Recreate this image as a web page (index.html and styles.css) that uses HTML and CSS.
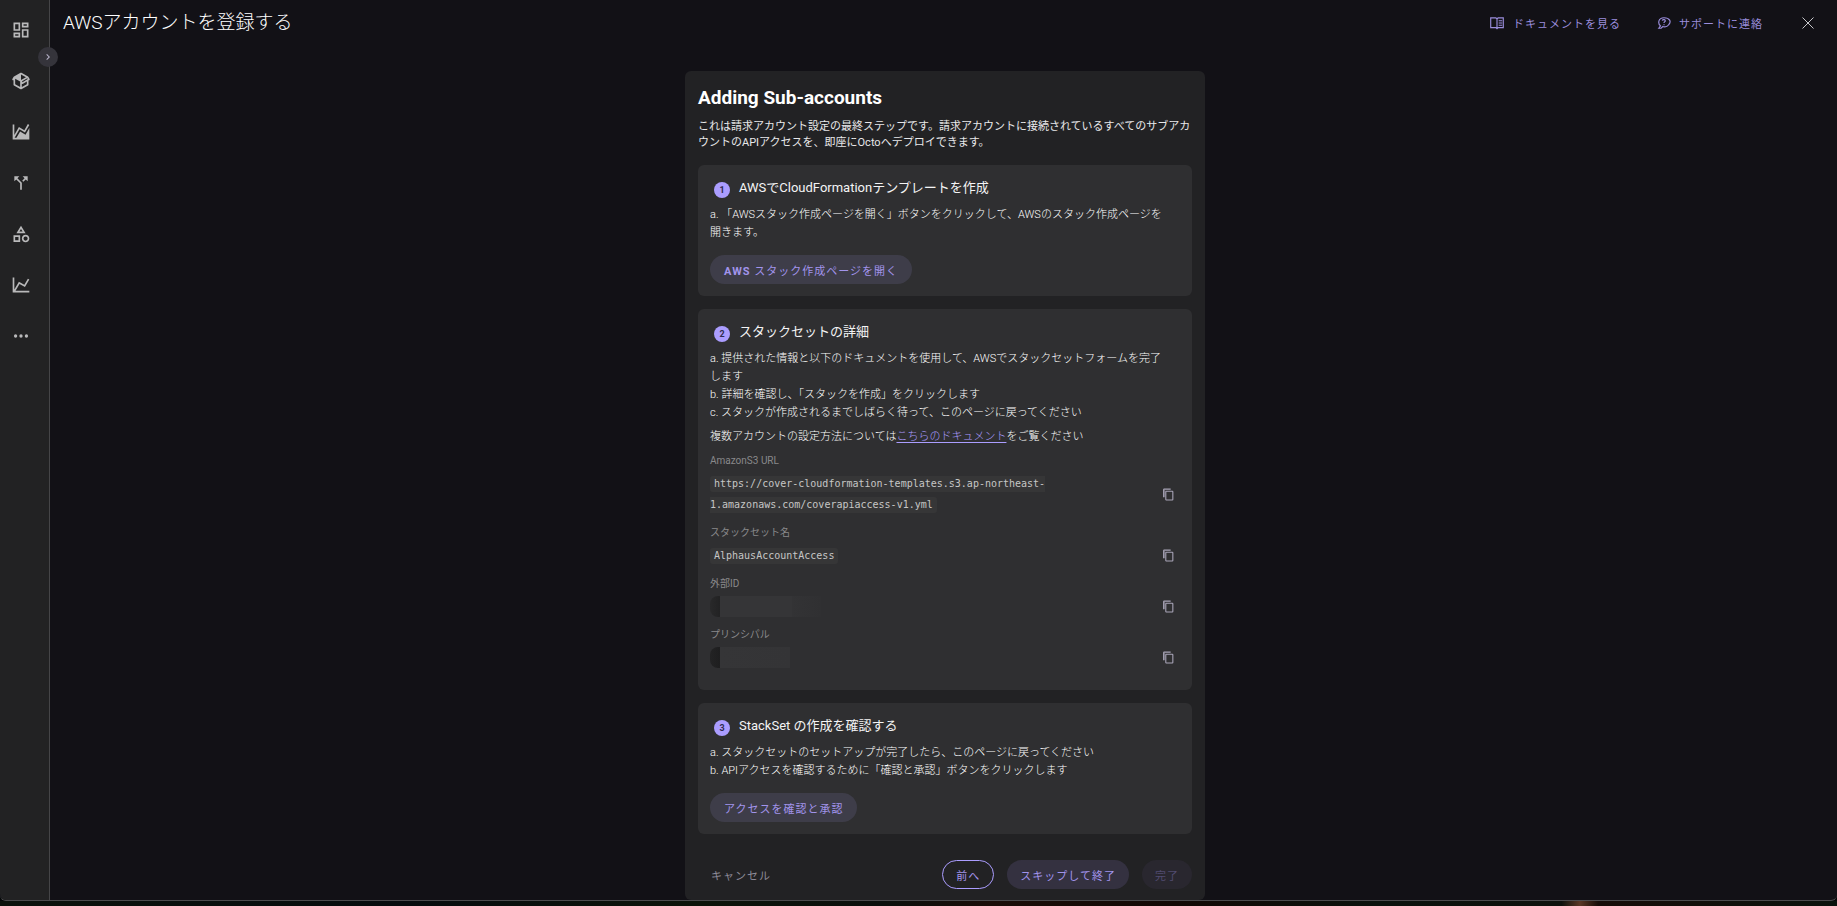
FILE: index.html
```html
<!DOCTYPE html>
<html lang="ja">
<head>
    <meta charset="UTF-8">
    <meta name="viewport" content="width=device-width, initial-scale=1.0">
    <title>AWSアカウントを登録する</title>
    <link rel="stylesheet" href="styles.css">
</head>
<body>
    <!-- Shared icons -->
    <svg class="defs" aria-hidden="true">
        <symbol id="icon-copy" viewBox="0 0 24 24">
            <path d="M19,21H8V7H19M19,5H8A2,2 0 0,0 6,7V21A2,2 0 0,0 8,23H19A2,2 0 0,0 21,21V7A2,2 0 0,0 19,5M16,1H4A2,2 0 0,0 2,3V17H4V3H16V1Z"/>
            <path d="M3 3h3v14H3z" opacity=".5"/>
        </symbol>
    </svg>

    <div class="window">
        <nav class="sidebar">
            <a href="#" aria-label="Dashboard"><svg viewBox="0 0 24 24"><path d="M19 5v2h-4V5h4M9 5v6H5V5h4m10 8v6h-4v-6h4M9 17v2H5v-2h4M21 3h-8v6h8V3zM11 3H3v10h8V3zm10 8h-8v10h8V11zm-10 4H3v6h8v-6z"/></svg></a>
            <a href="#" aria-label="Inventory"><svg viewBox="0 0 24 24"><path d="M2,10.96C1.5,10.68 1.35,10.07 1.63,9.59L3.13,7C3.24,6.8 3.41,6.66 3.6,6.58L11.43,2.18C11.59,2.06 11.79,2 12,2C12.21,2 12.41,2.06 12.57,2.18L20.47,6.62C20.66,6.72 20.82,6.88 20.91,7.08L22.36,9.6C22.64,10.08 22.47,10.69 22,10.96L21,11.54V16.5C21,16.88 20.79,17.21 20.47,17.38L12.57,21.82C12.41,21.94 12.21,22 12,22C11.79,22 11.59,21.94 11.43,21.82L3.53,17.38C3.21,17.21 3,16.88 3,16.5V10.96C2.7,11.13 2.32,11.14 2,10.96M12,4.15V4.15L12,10.85V10.85L17.96,7.5L12,4.15M5,15.91L11,19.29V12.58L5,9.21V15.91M19,15.91V12.69L14,15.59C13.67,15.77 13.3,15.76 13,15.6V19.29L19,15.91M13.85,13.36L20.13,9.73L19.55,8.72L13.27,12.35L13.85,13.36Z"/></svg></a>
            <a href="#" aria-label="Usage"><svg viewBox="0 0 24 24"><path d="M17.45,15.18L22,7.31V19L22,21H2V3H4V15.54L9.5,6L16,9.78L20.24,2.45L21.97,3.45L16.74,12.5L10.23,8.75L4.31,19H6.57L10.96,11.44L17.45,15.18Z"/></svg></a>
            <a href="#" aria-label="Allocation"><svg viewBox="0 0 24 24"><path d="M14,4L16.29,6.29L13.41,9.17L14.83,10.59L17.71,7.71L20,10V4M10,4H4V10L6.29,7.71L11,12.41V20H13V11.59L7.71,6.29"/></svg></a>
            <a href="#" aria-label="Categories"><svg viewBox="0 0 24 24"><path d="M11,13.5V21.5H3V13.5H11M9,15.5H5V19.5H9V15.5M12,2L17.5,11H6.5L12,2M12,5.86L10.08,9H13.92L12,5.86M17.5,13C20,13 22,15 22,17.5C22,20 20,22 17.5,22C15,22 13,20 13,17.5C13,15 15,13 17.5,13M17.5,15A2.5,2.5 0 0,0 15,17.5A2.5,2.5 0 0,0 17.5,20A2.5,2.5 0 0,0 20,17.5A2.5,2.5 0 0,0 17.5,15Z"/></svg></a>
            <a href="#" aria-label="Forecast"><svg viewBox="0 0 24 24"><path d="M16,11.78L20.24,4.45L21.97,5.45L16.74,14.5L10.23,10.75L5.46,19H22V21H2V3H4V17.54L9.5,8L16,11.78Z"/></svg></a>
            <a href="#" aria-label="More"><svg viewBox="0 0 24 24"><circle cx="5.5" cy="12" r="2"/><circle cx="12" cy="12" r="2"/><circle cx="18.5" cy="12" r="2"/></svg></a>
            <button class="sidebar-toggle" aria-label="Expand"><svg viewBox="0 0 24 24"><path d="M8.59,16.58L13.17,12L8.59,7.41L10,6L16,12L10,18L8.59,16.58Z"/></svg></button>
        </nav>

        <div class="page">
            <header class="topbar">
                <h1>AWSアカウントを登録する</h1>
                <div class="topbar-actions">
                    <a href="#" class="top-link">
                        <svg class="line book" viewBox="0 0 28 24"><path d="M3 3h9l2 2 2-2h9v17h-9l-2 2-2-2H3zM14 5v16M17 8h6M17 12h6M17 16h6"/></svg>
                        <span>ドキュメントを見る</span>
                    </a>
                    <a href="#" class="top-link support">
                        <svg class="line chat" viewBox="0 0 24 24"><path d="M3 21l3-4C1 13 2 3 12 3s13 7 8 12c-3 4-8 4-10 3l-3 3zM9 8c1-3 6-2 5 1-1 1-2 1-2 3M12 14v2"/></svg>
                        <span>サポートに連絡</span>
                    </a>
                    <button class="close" aria-label="閉じる"><svg class="line" viewBox="0 0 28 28"><path d="M3 3l22 22M25 3L3 25"/></svg></button>
                </div>
            </header>

            <main class="content">
                <div class="card">
                    <h2>Adding Sub-accounts</h2>
                    <p class="intro">これは請求アカウント設定の最終ステップです。請求アカウントに接続されているすべてのサブアカウントのAPIアクセスを、即座にOctoへデプロイできます。</p>

                    <section class="step">
                        <h3><span class="num">1</span>AWSでCloudFormationテンプレートを作成</h3>
                        <p>a. 「AWSスタック作成ページを開く」ボタンをクリックして、AWSのスタック作成ページを<br>開きます。</p>
                        <button class="btn tonal"><b>AWS</b> スタック作成ページを開く</button>
                    </section>

                    <section class="step">
                        <h3><span class="num">2</span>スタックセットの詳細</h3>
                        <p>a. 提供された情報と以下のドキュメントを使用して、AWSでスタックセットフォームを完了<br>します</p>
                        <p>b. 詳細を確認し、「スタックを作成」をクリックします</p>
                        <p>c. スタックが作成されるまでしばらく待って、このページに戻ってください</p>
                        <p class="note">複数アカウントの設定方法については<a href="#">こちらのドキュメント</a>をご覧ください</p>

                        <dl class="fields">
                            <dt>AmazonS3 URL</dt>
                            <dd>
                                <div class="value"><code>https://cover-cloudformation-templates.s3.ap-northeast-1.amazonaws.com/coverapiaccess-v1.yml</code></div>
                                <button class="copy" aria-label="コピー"><svg><use href="#icon-copy"/></svg></button>
                            </dd>
                            <dt>スタックセット名</dt>
                            <dd>
                                <div class="value"><code>AlphausAccountAccess</code></div>
                                <button class="copy" aria-label="コピー"><svg><use href="#icon-copy"/></svg></button>
                            </dd>
                            <dt>外部ID</dt>
                            <dd>
                                <div class="value"><span class="masked wide"></span></div>
                                <button class="copy" aria-label="コピー"><svg><use href="#icon-copy"/></svg></button>
                            </dd>
                            <dt>プリンシパル</dt>
                            <dd>
                                <div class="value"><span class="masked"></span></div>
                                <button class="copy" aria-label="コピー"><svg><use href="#icon-copy"/></svg></button>
                            </dd>
                        </dl>
                    </section>

                    <section class="step">
                        <h3><span class="num">3</span>StackSet の作成を確認する</h3>
                        <p>a. スタックセットのセットアップが完了したら、このページに戻ってください</p>
                        <p>b. APIアクセスを確認するために「確認と承認」ボタンをクリックします</p>
                        <button class="btn tonal">アクセスを確認と承認</button>
                    </section>

                    <footer class="actions">
                        <button class="btn text">キャンセル</button>
                        <button class="btn outlined">前へ</button>
                        <button class="btn skip">スキップして終了</button>
                        <button class="btn" disabled>完了</button>
                    </footer>
                </div>
            </main>
        </div>
    </div>
    <div class="desktop"></div>
</body>
</html>
```
FILE: styles.css
```css
* {
    box-sizing: border-box;
}
body {
    margin: 0;
    min-height: 100vh;
    display: flex;
    flex-direction: column;
    background-color: #050808;
    color: #e8e8ea;
    font-family: Roboto, "Noto Sans CJK JP", sans-serif;
    font-size: 11px;
}
h1, h2, h3, p, dl, dd {
    margin: 0;
}
button {
    font-family: inherit;
    border: none;
    padding: 0;
    background: none;
    cursor: pointer;
}
svg {
    display: block;
    fill: currentColor;
}
svg.line {
    fill: none;
    stroke: currentColor;
    stroke-width: 2;
}
.defs {
    display: none;
}
.window {
    flex: 1;
    display: flex;
    background-color: #121116;
    border-bottom: 1px solid #4c4c4e;
    border-radius: 0 0 6px 6px;
}
.desktop {
    height: 5px;
    background: linear-gradient(90deg, #0b120c, #060c0e 22%, #0c140a 38%, #0a0f0c 48%, #1a0d08 54%, #120905 64%, #0a120d 75%, #0d110c 85%, #5a3826 86%, #160c08 87%, #0a130d);
}

/* Sidebar */
.sidebar {
    position: relative;
    flex: none;
    width: 50px;
    padding: 4px 8px 0 0;
    background-color: #222223;
    border-right: 1px solid #454547;
    border-bottom-left-radius: 6px;
}
.sidebar a {
    display: flex;
    align-items: center;
    justify-content: center;
    height: 51px;
    color: #b9b9ba;
}
.sidebar a svg {
    width: 20px;
    height: 20px;
}
.sidebar-toggle {
    position: absolute;
    top: 47px;
    right: -9px;
    width: 20px;
    height: 20px;
    border-radius: 50%;
    background-color: #35343b;
    color: #b9b5cc;
}
.sidebar-toggle svg {
    width: 12px;
    height: 12px;
    margin: 0 auto;
}

/* Header */
.page {
    flex: 1;
    display: flex;
    flex-direction: column;
}
.topbar {
    display: flex;
    justify-content: space-between;
    height: 71px;
    padding: 9px 22px 0 13px;
}
.topbar h1 {
    font-size: 19px;
    line-height: 28px;
    font-weight: 300;
    color: #fff;
}
.topbar-actions {
    display: flex;
    height: 28px;
    align-items: center;
}
.top-link {
    display: flex;
    align-items: center;
    gap: 8px;
    margin-right: 36px;
    color: #9a8ddc;
    letter-spacing: 1px;
    text-decoration: none;
}
.top-link.support {
    margin-right: 38px;
}
.book {
    width: 16px;
    height: 14px;
}
.chat {
    width: 14px;
    height: 14px;
}
.close {
    width: 14px;
    height: 14px;
    color: #c6c6ca;
}

/* Card */
.content {
    flex: 1;
    display: flex;
    justify-content: center;
    padding-left: 3px;
}
.card {
    width: 520px;
    padding: 14px 13px 11px;
    background-color: #222224;
    border-radius: 6px;
}
.card h2 {
    font-size: 19px;
    line-height: 26px;
    font-weight: 700;
    color: #fff;
}
.intro {
    margin: 8px 0 14px;
    line-height: 16px;
}
.step {
    margin-bottom: 13px;
    padding: 12px;
    background-color: #2f2f31;
    border-radius: 6px;
}
.step h3 {
    display: flex;
    align-items: center;
    gap: 9px;
    margin-bottom: 7px;
    padding-left: 4px;
    font-size: 13px;
    line-height: 22px;
    font-weight: 400;
    color: #f4f4f5;
}
.num {
    width: 16px;
    height: 16px;
    margin-top: 3px;
    border-radius: 50%;
    background-color: #ab9dff;
    color: #2f2a50;
    font-size: 9px;
    line-height: 16px;
    font-weight: 700;
    text-align: center;
}
.step p {
    line-height: 18px;
    font-weight: 300;
    color: #fff;
}
.step .note {
    margin-top: 6px;
}
.note a {
    color: #ab9dff;
    text-underline-offset: 2px;
}

/* Stack set values */
.fields {
    padding-bottom: 7px;
}
.fields dt {
    margin-top: 7px;
    font-size: 10px;
    line-height: 16px;
    color: #89898b;
}
.fields dd {
    display: flex;
    align-items: center;
    justify-content: space-between;
    padding: 4px 5px 3px 0;
}
.value {
    width: 400px;
    line-height: 21px;
}
code {
    padding: 2px 4px 3px;
    border-radius: 3px;
    background-color: #363637;
    color: #c6c6c6;
    font-family: "DejaVu Sans Mono", monospace;
    font-size: 10px;
}
.masked {
    display: block;
    width: 80px;
    height: 21px;
    background: linear-gradient(90deg, #232324, #1e1e1f 10px, #353537 10px, #343436);
    border-radius: 8px 0 0 8px;
}
.masked.wide {
    width: 111px;
    background: linear-gradient(90deg, #29292a, #222223 10px, #353537 10px, #353537 82px, #333335 82px, #303032);
}
.copy {
    width: 13px;
    height: 13px;
    color: #a9a5b8;
}
.copy svg {
    width: 13px;
    height: 13px;
}

/* Buttons */
.btn {
    height: 29px;
    padding: 0 14px;
    border-radius: 15px;
    color: #a294ec;
    font-size: 11px;
    font-weight: 400;
    letter-spacing: 1px;
}
.btn.tonal {
    display: block;
    margin-top: 13px;
    background-color: #3e3d49;
}
.btn.outlined {
    border: 1px solid #ab9dff;
}
.btn.skip {
    background-color: #343140;
}
.btn.text {
    margin-right: auto;
    color: #8d8a98;
}
.btn:disabled {
    background-color: #29272f;
    color: #514b70;
}
.actions {
    display: flex;
    gap: 13px;
    padding-top: 13px;
}
.actions .btn {
    padding: 0 13px;
}
```
